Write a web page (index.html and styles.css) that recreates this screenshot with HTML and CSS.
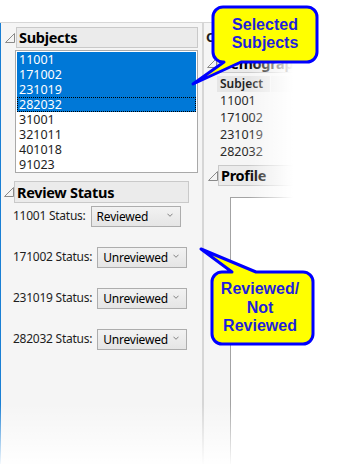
FILE: index.html
```html
<!DOCTYPE html>
<html lang="en">

<head>
	<meta charset="UTF-8">
	<title>Subject Review</title>
	<link rel="stylesheet" href="styles.css">
</head>

<body>
	<div class="shot">
		<div class="top"></div>
		<div class="window">
			<!-- left column: subjects + review status -->
			<div class="left">
				<div class="outline subj-head">
					<svg class="tri" viewBox="0 0 10 10"><polygon points="0.5,9.5 9.5,0.5 9.5,9.5"></polygon></svg>
					<div class="title">Subjects</div>
				</div>
				<ul class="listbox">
					<li class="sel">11001</li>
					<li class="sel">171002</li>
					<li class="sel">231019</li>
					<li class="sel focus">282032</li>
					<li>31001</li>
					<li>321011</li>
					<li>401018</li>
					<li>91023</li>
				</ul>

				<div class="outline review-head">
					<svg class="tri" viewBox="0 0 10 10"><polygon points="0.5,9.5 9.5,0.5 9.5,9.5"></polygon></svg>
					<div class="title">Review Status</div>
				</div>
				<div class="status">
					<span class="label">11001 Status:</span>
					<div class="combo"><span>Reviewed</span><svg class="chev" viewBox="0 0 7 4"><polyline points="0.5,0.5 3.5,3.5 6.5,0.5"></polyline></svg></div>
				</div>
				<div class="status">
					<span class="label">171002 Status:</span>
					<div class="combo"><span>Unreviewed</span><svg class="chev" viewBox="0 0 7 4"><polyline points="0.5,0.5 3.5,3.5 6.5,0.5"></polyline></svg></div>
				</div>
				<div class="status">
					<span class="label">231019 Status:</span>
					<div class="combo"><span>Unreviewed</span><svg class="chev" viewBox="0 0 7 4"><polyline points="0.5,0.5 3.5,3.5 6.5,0.5"></polyline></svg></div>
				</div>
				<div class="status">
					<span class="label">282032 Status:</span>
					<div class="combo"><span>Unreviewed</span><svg class="chev" viewBox="0 0 7 4"><polyline points="0.5,0.5 3.5,3.5 6.5,0.5"></polyline></svg></div>
				</div>
			</div>

			<!-- right column: demographics + profile -->
			<div class="right">
				<div class="top-head">Overview</div>
				<div class="outline demo-head">
					<svg class="tri" viewBox="0 0 10 10"><polygon points="0.5,9.5 9.5,0.5 9.5,9.5"></polygon></svg>
					<div class="title">Demographics</div>
				</div>
				<div class="grid">
					<div class="grid-row head">
						<span class="cell">Subject</span>
						<span class="cell cell-2">Age</span>
					</div>
					<div class="grid-row"><span class="cell">11001</span></div>
					<div class="grid-row"><span class="cell">171002</span></div>
					<div class="grid-row"><span class="cell">231019</span></div>
					<div class="grid-row"><span class="cell">282032</span></div>
				</div>
				<div class="outline profile-head">
					<svg class="tri" viewBox="0 0 10 10"><polygon points="0.5,9.5 9.5,0.5 9.5,9.5"></polygon></svg>
					<div class="title">Profile</div>
				</div>
				<div class="frame"></div>
			</div>
		</div>

		<div class="fade-right"></div>
		<div class="fade-bottom"></div>

		<!-- callouts -->
		<svg class="callouts" viewBox="0 0 346 464">
			<path d="M223 7 H307 A10 10 0 0 1 317 17 V52 A10 10 0 0 1 307 62 H241 L193 84 L224 62 A10 10 0 0 1 213 52 V17 A10 10 0 0 1 223 7 Z"></path>
			<path d="M222 272 H232 L201 249 L256 272 H303 A10 10 0 0 1 313 282 V334 A10 10 0 0 1 303 344 H222 A10 10 0 0 1 212 334 V282 A10 10 0 0 1 222 272 Z"></path>
		</svg>
		<div class="note note-subjects">Selected<br>Subjects</div>
		<div class="note note-review">Reviewed/<br>Not<br>Reviewed</div>
	</div>
</body>

</html>
```

FILE: styles.css
```css
* {
	margin: 0;
	padding: 0;
	box-sizing: border-box;
}

body {
	background: #fff;
}

.shot {
	width: 346px;
	height: 464px;
	position: relative;
	overflow: hidden;
	display: flex;
	flex-direction: column;
	font-family: "Noto Sans", "Open Sans", sans-serif;
	font-size: 12px;
	color: #1e1e1e;
}

.top {
	height: 22px;
	flex: none;
}

.window {
	flex: 1;
	display: flex;
	border-top: 1px solid #d6d6d6;
}

/* outline headers */
.outline {
	display: flex;
	align-items: center;
}

.tri {
	width: 10px;
	height: 10px;
	flex: none;
}

.tri polygon {
	fill: #f4f4f4;
	stroke: #8a8a8a;
	stroke-width: 1;
}

.outline .title {
	height: 21px;
	line-height: 19px;
	padding-left: 2px;
	border: 1px solid #c9c9c9;
	background: #ebebeb;
	font-weight: bold;
	font-size: 14.5px;
	letter-spacing: -0.3px;
	color: #000;
	white-space: nowrap;
	overflow: hidden;
}

/* left column */
.left {
	width: 202px;
	flex: none;
	border-left: 1px solid #1a7fd4;
	background: #f5f5f5;
}

.subj-head {
	margin: 4px 0 0 4px;
}

.subj-head .title {
	width: 182px;
	margin-left: 1px;
}

.listbox {
	list-style: none;
	margin: 2px 0 0 14px;
	width: 183px;
	height: 123px;
	padding: 1px 0;
	border: 1px solid #a9a9a9;
	background: #fff;
	font-size: 12.5px;
}

.listbox li {
	height: 15px;
	line-height: 15px;
	margin: 0 1px;
	padding-left: 2px;
}

.listbox .sel {
	background: #0078d7;
	color: #fff;
}

.listbox .focus {
	outline: 1px dotted #000;
	outline-offset: -1px;
}

.review-head {
	margin: 8px 0 0 3px;
}

.review-head .title {
	width: 175px;
	height: 22px;
	line-height: 20px;
}

.status {
	display: flex;
	align-items: flex-start;
	margin-top: 20px;
	padding-left: 12px;
}

.review-head+.status {
	margin-top: 3px;
}

.status .label {
	padding-top: 1px;
	margin-right: 5px;
	letter-spacing: -0.25px;
	white-space: nowrap;
}

.combo {
	width: 90px;
	height: 21px;
	flex: none;
	display: flex;
	align-items: center;
	justify-content: space-between;
	padding: 0 7px 0 5px;
	border: 1px solid #adadad;
	background: linear-gradient(#f2f2f2, #e5e5e5);
	font-size: 12px;
	letter-spacing: -0.2px;
	color: #000;
}

.chev {
	width: 6px;
	height: 4px;
	margin-bottom: 3px;
}

.chev polyline {
	fill: none;
	stroke: #707070;
	stroke-width: 1;
}

/* right column */
.right {
	flex: 1;
	display: flex;
	flex-direction: column;
	border-left: 2px solid #d6d6d6;
	background: #f5f5f5;
}

.top-head {
	margin: 7px 0 0 2px;
	height: 15px;
	line-height: 15px;
	font-weight: bold;
	font-size: 13px;
}

.demo-head {
	margin: 8px 0 0 3px;
}

.demo-head .title {
	width: 125px;
	height: 20px;
	line-height: 18px;
}

.grid {
	margin: 3px 0 0 13px;
}

.grid-row {
	display: flex;
	height: 17px;
	line-height: 17px;
	font-size: 12.5px;
	color: #2a2a2a;
}

.grid-row.head {
	height: 16px;
	line-height: 16px;
	font-weight: 600;
	font-size: 12px;
	color: #222;
}

.grid-row .cell {
	width: 53px;
	padding-left: 3px;
}

.grid-row.head .cell {
	background: #e6e6e6;
}

.grid-row.head .cell-2 {
	margin-left: 1px;
	width: 60px;
	background: #ededed;
	color: #ededed;
}

.profile-head {
	margin: 5px 0 0 4px;
}

.profile-head .title {
	width: 110px;
	height: 21px;
	line-height: 19px;
}

.frame {
	flex: 1;
	margin: 11px 0 0 26px;
	border-left: 1px solid #a3a3a3;
	border-top: 1px solid #a3a3a3;
	background: #fff;
}

/* torn-edge fades */
.fade-right {
	position: absolute;
	top: 0;
	bottom: 0;
	left: 248px;
	right: 0;
	background: linear-gradient(to right, rgba(255, 255, 255, 0), #fff 45px);
}

.fade-bottom {
	position: absolute;
	left: 0;
	right: 0;
	bottom: 0;
	height: 60px;
	background: linear-gradient(rgba(255, 255, 255, 0), rgba(255, 255, 255, 0.95));
}

/* callouts */
.callouts {
	position: absolute;
	top: 0;
	left: 0;
	width: 346px;
	height: 464px;
	z-index: 3;
}

.callouts path {
	fill: #ffff00;
	stroke: #0000ff;
	stroke-width: 3;
	stroke-linejoin: round;
}

.note {
	position: absolute;
	z-index: 4;
	text-align: center;
	font-family: "Liberation Sans", Arial, sans-serif;
	font-weight: bold;
	font-size: 16px;
	color: #1f1fdc;
}

.note-subjects {
	left: 213px;
	top: 16px;
	width: 104px;
	line-height: 18px;
}

.note-review {
	left: 212px;
	top: 280px;
	width: 96px;
	line-height: 18.5px;
}
```
